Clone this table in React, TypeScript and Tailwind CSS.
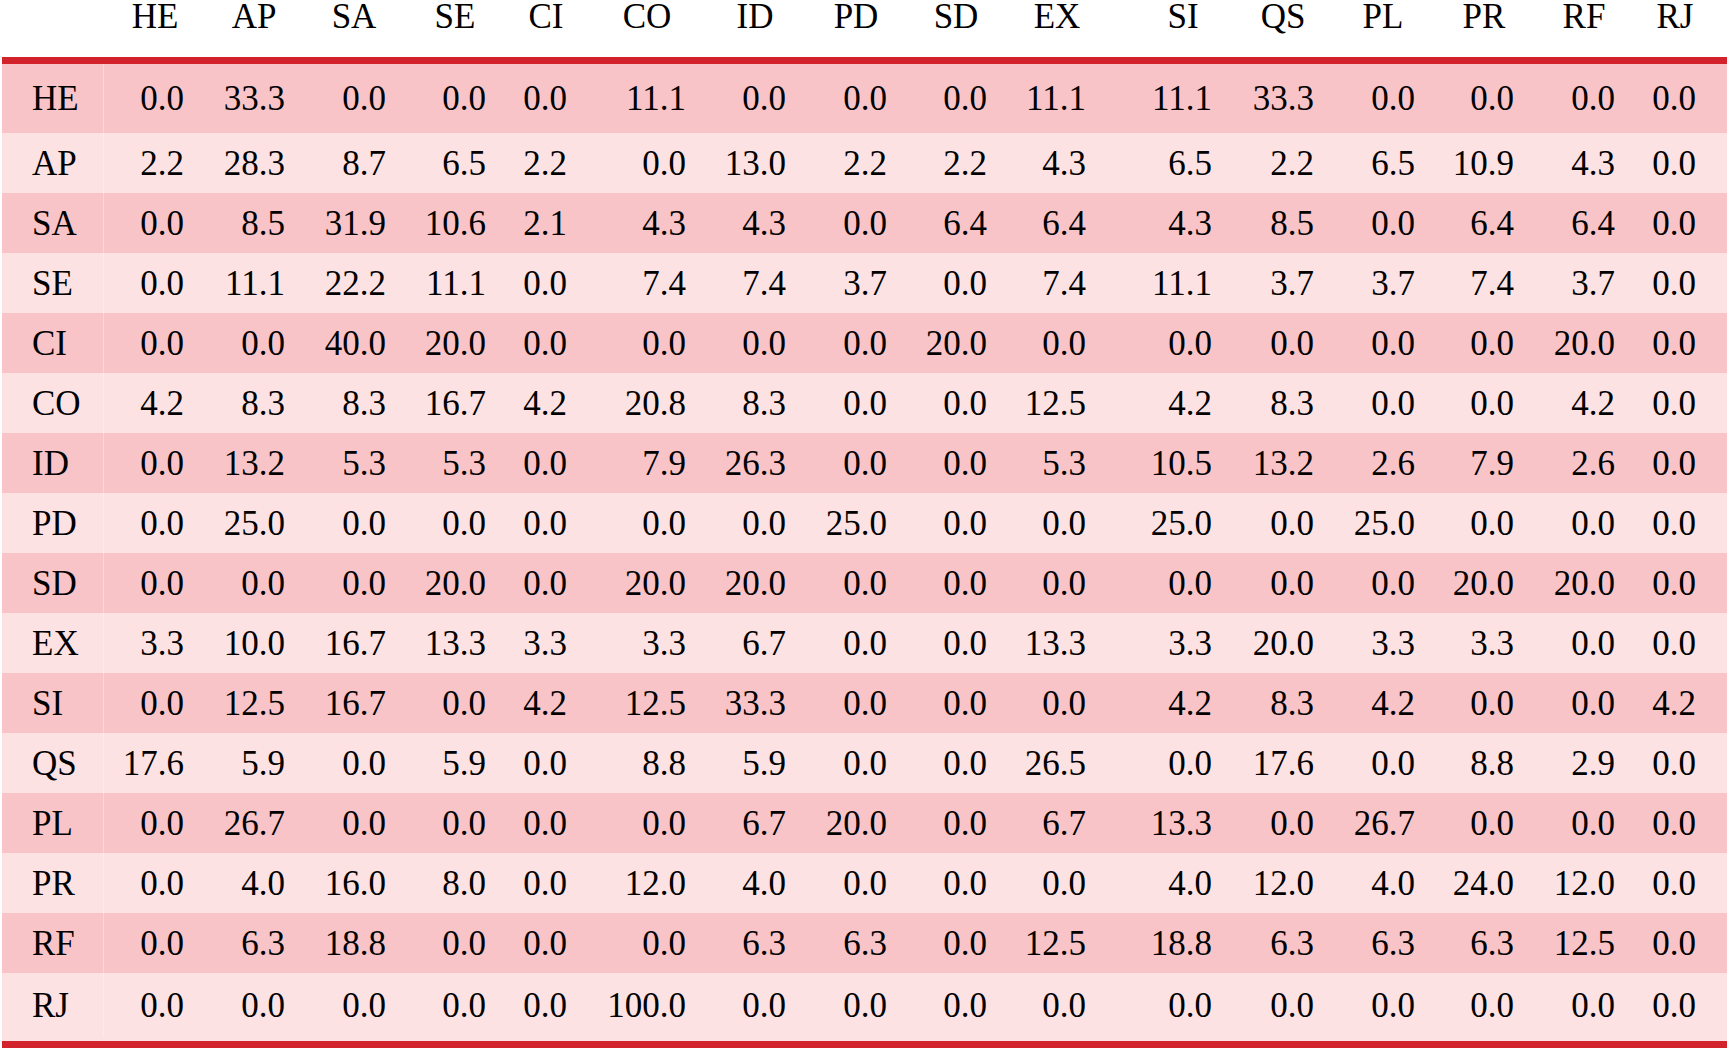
import React from 'react';

type Col = { name: string; w: string; hw: string };

// cell widths run from the previous column's text edge to this one's, numbers sit flush right
const cols: Col[] = [
  { name: 'HE', w: 'w-[81px]', hw: 'w-[60px]' },
  { name: 'AP', w: 'w-[101px]', hw: 'w-[64px]' },
  { name: 'SA', w: 'w-[101px]', hw: 'w-[66px]' },
  { name: 'SE', w: 'w-[100px]', hw: 'w-[64px]' },
  { name: 'CI', w: 'w-[81px]', hw: 'w-[44px]' },
  { name: 'CO', w: 'w-[119px]', hw: 'w-[80px]' },
  { name: 'ID', w: 'w-[100px]', hw: 'w-[64px]' },
  { name: 'PD', w: 'w-[101px]', hw: 'w-[64px]' },
  { name: 'SD', w: 'w-[100px]', hw: 'w-[64px]' },
  { name: 'EX', w: 'w-[99px]', hw: 'w-[60px]' },
  { name: 'SI', w: 'w-[126px]', hw: 'w-[60px]' },
  { name: 'QS', w: 'w-[102px]', hw: 'w-[64px]' },
  { name: 'PL', w: 'w-[101px]', hw: 'w-[66px]' },
  { name: 'PR', w: 'w-[99px]', hw: 'w-[62px]' },
  { name: 'RF', w: 'w-[101px]', hw: 'w-[64px]' },
  { name: 'RJ', w: 'w-[81px]', hw: 'w-[44px]' },
];

const rows: [string, string[]][] = [
  ['HE', ['0.0', '33.3', '0.0', '0.0', '0.0', '11.1', '0.0', '0.0', '0.0', '11.1', '11.1', '33.3', '0.0', '0.0', '0.0', '0.0']],
  ['AP', ['2.2', '28.3', '8.7', '6.5', '2.2', '0.0', '13.0', '2.2', '2.2', '4.3', '6.5', '2.2', '6.5', '10.9', '4.3', '0.0']],
  ['SA', ['0.0', '8.5', '31.9', '10.6', '2.1', '4.3', '4.3', '0.0', '6.4', '6.4', '4.3', '8.5', '0.0', '6.4', '6.4', '0.0']],
  ['SE', ['0.0', '11.1', '22.2', '11.1', '0.0', '7.4', '7.4', '3.7', '0.0', '7.4', '11.1', '3.7', '3.7', '7.4', '3.7', '0.0']],
  ['CI', ['0.0', '0.0', '40.0', '20.0', '0.0', '0.0', '0.0', '0.0', '20.0', '0.0', '0.0', '0.0', '0.0', '0.0', '20.0', '0.0']],
  ['CO', ['4.2', '8.3', '8.3', '16.7', '4.2', '20.8', '8.3', '0.0', '0.0', '12.5', '4.2', '8.3', '0.0', '0.0', '4.2', '0.0']],
  ['ID', ['0.0', '13.2', '5.3', '5.3', '0.0', '7.9', '26.3', '0.0', '0.0', '5.3', '10.5', '13.2', '2.6', '7.9', '2.6', '0.0']],
  ['PD', ['0.0', '25.0', '0.0', '0.0', '0.0', '0.0', '0.0', '25.0', '0.0', '0.0', '25.0', '0.0', '25.0', '0.0', '0.0', '0.0']],
  ['SD', ['0.0', '0.0', '0.0', '20.0', '0.0', '20.0', '20.0', '0.0', '0.0', '0.0', '0.0', '0.0', '0.0', '20.0', '20.0', '0.0']],
  ['EX', ['3.3', '10.0', '16.7', '13.3', '3.3', '3.3', '6.7', '0.0', '0.0', '13.3', '3.3', '20.0', '3.3', '3.3', '0.0', '0.0']],
  ['SI', ['0.0', '12.5', '16.7', '0.0', '4.2', '12.5', '33.3', '0.0', '0.0', '0.0', '4.2', '8.3', '4.2', '0.0', '0.0', '4.2']],
  ['QS', ['17.6', '5.9', '0.0', '5.9', '0.0', '8.8', '5.9', '0.0', '0.0', '26.5', '0.0', '17.6', '0.0', '8.8', '2.9', '0.0']],
  ['PL', ['0.0', '26.7', '0.0', '0.0', '0.0', '0.0', '6.7', '20.0', '0.0', '6.7', '13.3', '0.0', '26.7', '0.0', '0.0', '0.0']],
  ['PR', ['0.0', '4.0', '16.0', '8.0', '0.0', '12.0', '4.0', '0.0', '0.0', '0.0', '4.0', '12.0', '4.0', '24.0', '12.0', '0.0']],
  ['RF', ['0.0', '6.3', '18.8', '0.0', '0.0', '0.0', '6.3', '6.3', '0.0', '12.5', '18.8', '6.3', '6.3', '6.3', '12.5', '0.0']],
  ['RJ', ['0.0', '0.0', '0.0', '0.0', '0.0', '100.0', '0.0', '0.0', '0.0', '0.0', '0.0', '0.0', '0.0', '0.0', '0.0', '0.0']],
];

export default function App() {
  return (
    <div
      className="w-[1730px] h-[1051px] bg-white text-black pl-[2px] pr-[3px] text-[35px] overflow-hidden"
      style={{ fontFamily: '"Liberation Serif", "Times New Roman", serif' }}
    >
      {/* header */}
      <div className="flex h-[57px] items-start leading-[33px]">
        <div className="w-[102px] shrink-0" />
        {cols.map((c) => (
          <div key={c.name} className={cn(c.w, 'shrink-0 flex justify-end')}>
            <div className={cn(c.hw, 'text-center')}>{c.name}</div>
          </div>
        ))}
      </div>

      <div className="h-[7px] bg-[#d2232c]" />

      {rows.map(([label, vals], i) => (
        <div
          key={label}
          className={cn(
            'flex items-center leading-none',
            i % 2 === 0 ? 'bg-[#f9c4c8]' : 'bg-[#fde2e4]',
            i === 0 ? 'h-[69px]' : i === rows.length - 1 ? 'h-[68px] pb-[4px]' : 'h-[60px]'
          )}
        >
          <div className="w-[102px] shrink-0 h-full flex items-center pl-[30px] border-r border-white/30">
            {label}
          </div>
          {vals.map((v, j) => (
            <div key={j} className={cn(cols[j].w, 'shrink-0 text-right', j === 0 ? '-ml-px' : '')}>
              {v}
            </div>
          ))}
        </div>
      ))}

      <div className="h-[7px] bg-[#d2232c]" />
    </div>
  );
}

function cn(...parts: string[]) {
  return parts.filter(Boolean).join(' ');
}
